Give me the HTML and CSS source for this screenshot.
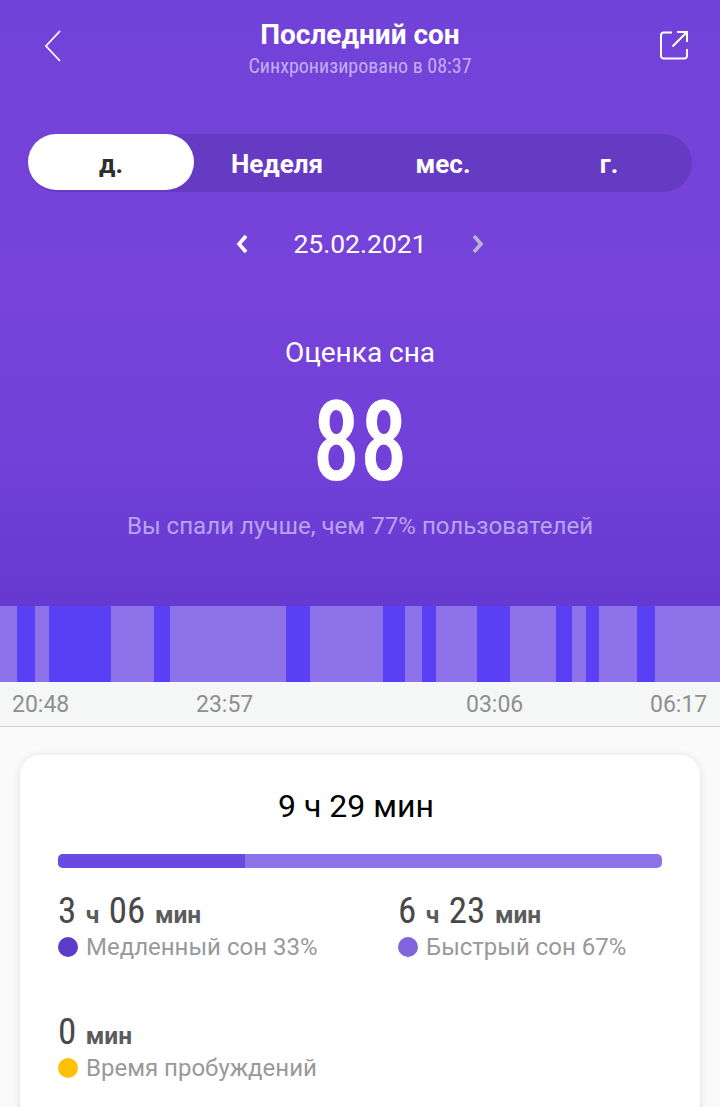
FILE: index.html
```html
<!DOCTYPE html>
<html lang="ru">
<head>
<meta charset="utf-8">
<title>Последний сон</title>
<link rel="stylesheet" href="styles.css">
</head>
<body>
<div class="hero">
  <header class="topbar">
    <svg class="icon back" viewBox="0 0 20 34" width="20" height="34"><path d="M17 2 3 17l14 15" fill="none" stroke="#fff" stroke-width="1.800"/></svg>
    <div class="titles">
      <h1 class="title">Последний сон</h1>
      <p class="subtitle">Синхронизировано в 08:37</p>
    </div>
    <svg class="icon share" viewBox="0 0 30 30" width="30" height="30"><path d="M13 2.500H4.500a2.500 2.500 0 0 0-2.500 2.500v21a2.500 2.500 0 0 0 2.500 2.500h21a2.500 2.500 0 0 0 2.500-2.500V19M28 2 13.500 16.500M18 2h10v10" fill="none" stroke="#fff" stroke-width="2"/></svg>
  </header>
  <nav class="tabs">
    <span class="tab active">д.</span>
    <span class="tab">Неделя</span>
    <span class="tab">мес.</span>
    <span class="tab">г.</span>
  </nav>
  <div class="date-row">
    <svg class="chev" viewBox="0 0 14 20" width="14" height="20"><path d="M11 2 4 10l7 8" fill="none" stroke="#fff" stroke-width="3.600"/></svg>
    <span class="date">25.02.2021</span>
    <svg class="chev" viewBox="0 0 14 20" width="14" height="20"><path d="m3 2 7 8-7 8" fill="none" stroke="#b9b3cf" stroke-width="3.600"/></svg>
  </div>
  <div class="score-block">
    <div class="score-label">Оценка сна</div>
    <div class="score"><span class="score-num">88</span></div>
    <div class="score-note">Вы спали лучше, чем 77% пользователей</div>
  </div>
</div>
<div class="stages">
  <i class="seg" style="width:17px"></i><i class="seg deep" style="width:18px"></i><i class="seg" style="width:14px"></i><i class="seg deep" style="width:62px"></i><i class="seg" style="width:43px"></i><i class="seg deep" style="width:16px"></i><i class="seg" style="width:116px"></i><i class="seg deep" style="width:24px"></i><i class="seg" style="width:73px"></i><i class="seg deep" style="width:22px"></i><i class="seg" style="width:17px"></i><i class="seg deep" style="width:14px"></i><i class="seg" style="width:41px"></i><i class="seg deep" style="width:33px"></i><i class="seg" style="width:46px"></i><i class="seg deep" style="width:16px"></i><i class="seg" style="width:14px"></i><i class="seg deep" style="width:13px"></i><i class="seg" style="width:38px"></i><i class="seg deep" style="width:18px"></i><i class="seg" style="width:65px"></i>
</div>
<div class="axis">
  <span>20:48</span><span>23:57</span><span>03:06</span><span>06:17</span>
</div>
<section class="card">
  <div class="total">9 ч 29 мин</div>
  <div class="progress"><div class="progress-fill" style="width:31%"></div></div>
  <div class="stats">
    <div class="stat">
      <div class="value"><b>3</b><span>ч</span><b>06</b><span>мин</span></div>
      <div class="legend"><i class="dot dot-deep"></i>Медленный сон 33%</div>
    </div>
    <div class="stat">
      <div class="value"><b>6</b><span>ч</span><b>23</b><span>мин</span></div>
      <div class="legend"><i class="dot dot-light"></i>Быстрый сон 67%</div>
    </div>
    <div class="stat">
      <div class="value"><b>0</b><span>мин</span></div>
      <div class="legend"><i class="dot dot-awake"></i>Время пробуждений</div>
    </div>
  </div>
</section>
</body>
</html>
```
FILE: styles.css
```css
* { box-sizing: border-box; }
html, body { margin: 0; padding: 0; }
body {
  width: 720px;
  height: 1107px;
  overflow: hidden;
  background: #fafafa;
  font-family: Roboto, "Noto Sans", sans-serif;
}
.hero {
  height: 606px;
  padding-top: 18px;
  background: linear-gradient(180deg, #7142d9 0%, #7743da 48%, #7040d8 78%, #6639d0 100%);
  color: #fff;
}
.topbar {
  display: flex;
  align-items: flex-start;
  justify-content: space-between;
  height: 116px;
  padding: 0 31px 0 43px;
}
.back { margin-top: 11px; }
.share { margin-top: 12px; }
.titles { text-align: center; margin-left: -2px; }
.title { margin: 0; font-size: 28px; line-height: 34px; font-weight: 700; }
.subtitle { margin: 2px 0 0; font-size: 20px; line-height: 24px; color: #c2aef0; font-stretch: condensed; }
.tabs {
  display: grid;
  grid-template-columns: 166px 166px 166px 166px;
  height: 58px;
  margin: 0 28px;
  border-radius: 29px;
  background: #663bc4;
}
.tab {
  display: flex;
  align-items: center;
  justify-content: center;
  height: 56px;
  font-size: 26px;
  font-weight: 700;
  padding-top: 4px;
}
.active { background: #fff; color: #2e2e2e; border-radius: 28px; }
.date-row {
  display: flex;
  align-items: center;
  justify-content: center;
  gap: 43px;
  margin-top: 27px;
  height: 50px;
}
.date { font-size: 26.500px; line-height: 50px; width: 136px; text-align: center; white-space: nowrap; }
.score-block { margin-top: 66px; text-align: center; }
.score-label { font-size: 28px; line-height: 36px; }
.score { font-size: 112px; line-height: 112px; margin-top: 15px; margin-bottom: -2px; font-weight: 470; }
.score-num { display: inline-block; font-stretch: condensed; transform: scaleX(.85); }
.score-note { margin-top: 14px; font-size: 24.100px; line-height: 32px; color: #b9a3ee; }
.stages { display: flex; height: 76px; }
.seg { display: block; height: 76px; background: #8e72e9; }
.deep { background: #5a40f4; }
.axis {
  display: grid;
  grid-template-columns: 184px 270px 184px auto;
  height: 45px;
  padding: 1px 12px 0;
  background: #f5f7f7;
  border-bottom: 1px solid #cfd2d2;
  color: #8f8f8f;
  font-size: 23px;
  line-height: 44px;
}
.card {
  margin: 28px 20px 0;
  height: 400px;
  padding: 33px 38px 0;
  background: #fff;
  border-radius: 20px;
  box-shadow: 0 1px 8px rgba(0,0,0,.12);
}
.total { font-size: 32px; line-height: 36px; text-align: center; color: #000; padding-right: 8px; }
.progress { height: 14px; margin-top: 30px; border-radius: 5px; background: #8e72e9; overflow: hidden; }
.progress-fill { height: 100%; background: #6a4be2; }
.stats { display: grid; grid-template-columns: 340px 1fr; row-gap: 48px; margin-top: 23px; }
.value { display: flex; align-items: baseline; gap: 9.500px; height: 40px; font-size: 24.500px; line-height: 40px; font-weight: 700; color: #5c5c5c; white-space: nowrap; }
.value b { font-size: 37px; font-weight: 440; font-stretch: condensed; color: #484848; }
.legend { display: flex; align-items: center; height: 34px; margin-top: -1px; font-size: 24px; line-height: 34px; color: #999; }
.dot { width: 20px; height: 20px; margin-right: 8px; border-radius: 50%; }
.dot-deep { background: #5c3ccb; }
.dot-light { background: #8165dc; }
.dot-awake { background: #ffc107; }
```
